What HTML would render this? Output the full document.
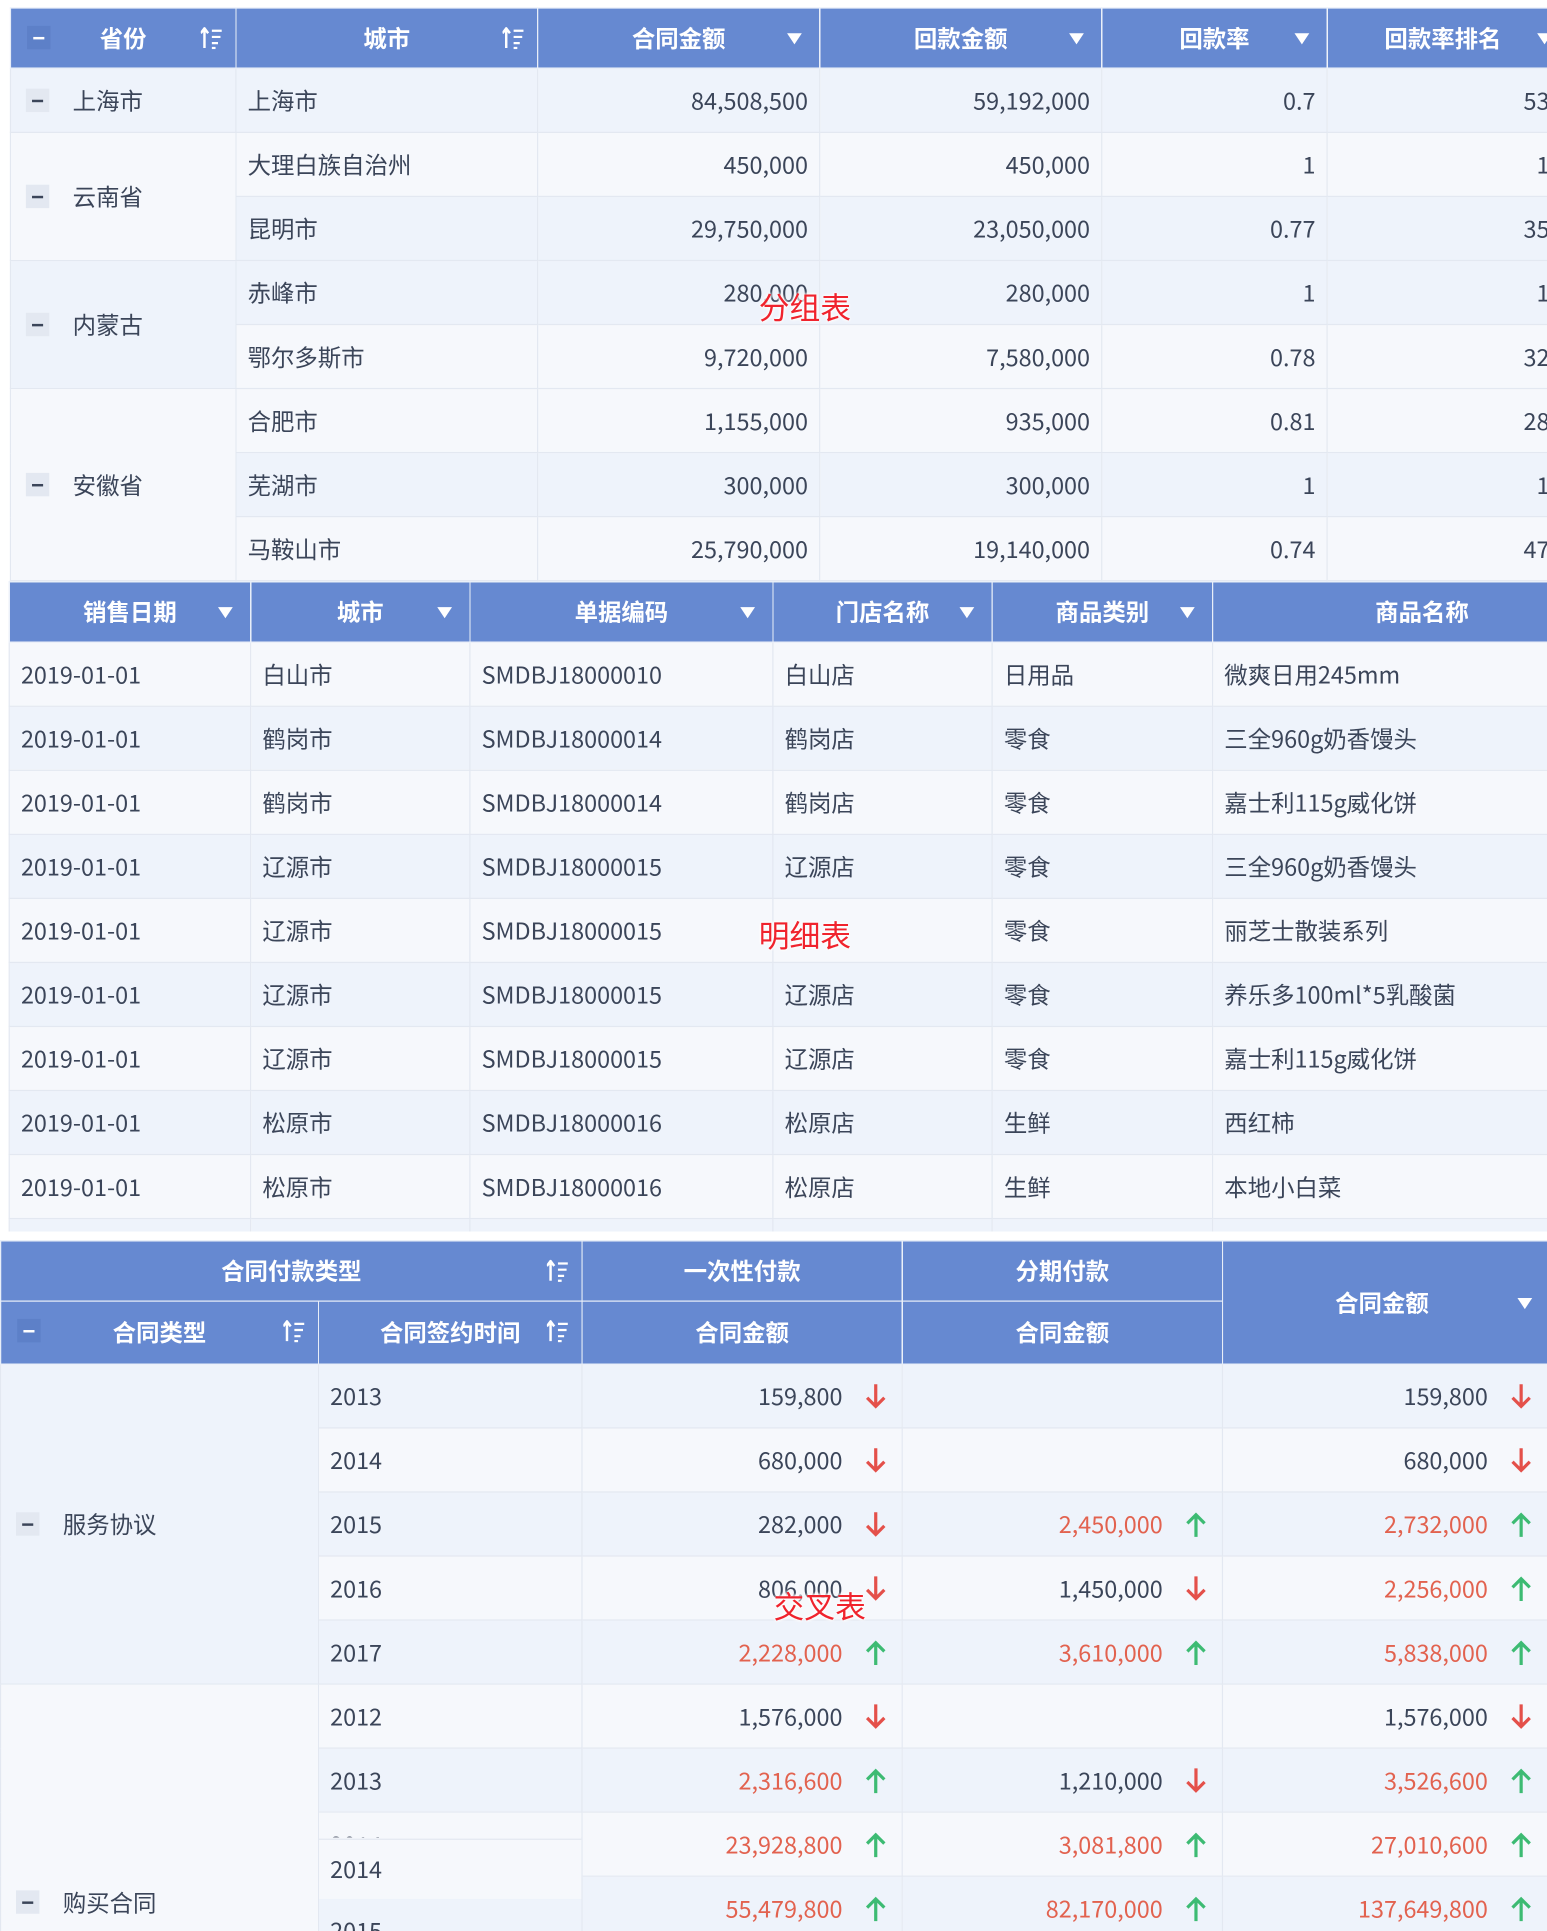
<!DOCTYPE html>
<html><head><meta charset="utf-8">
<style>
html,body{margin:0;padding:0;background:#fff;width:1547px;height:1931px;overflow:hidden;}
#w{position:absolute;left:0;top:0;width:1256px;height:1568px;transform:scale(1.23169,1.2315);transform-origin:0 0;overflow:hidden;background:#fff;font-family:"Noto Sans CJK SC","Liberation Sans",sans-serif;}
table{position:absolute;border-collapse:collapse;table-layout:fixed;}
td,th{border:1px solid #e3e8f1;padding:0 9px;font-size:19px;color:#3b4559;white-space:nowrap;overflow:hidden;position:relative;font-weight:normal;line-height:24px;}
th{background:#6689d1;color:#fff;font-weight:bold;border-color:#e8eef8;text-align:center;}
.a{background:#eef3fb}.b{background:#f6f8fc}
.r{text-align:right}
.m{display:inline-block;width:19px;height:19px;background:#e3e8f1;vertical-align:middle;margin-right:19px;position:relative;top:-2px}
.m:after{content:"";position:absolute;left:5px;top:9px;width:9px;height:2px;background:#3b4559}
th .m{background:#5d80c8;position:absolute;left:13px;top:14px}
th .m:after{background:#fff}
.s{position:absolute;right:10px;top:15px}
.f{position:absolute;right:14px;top:20px;width:0;height:0;border-left:6px solid transparent;border-right:6px solid transparent;border-top:9px solid #fff}
.red{color:#e2624f}
.ar{position:absolute;right:12px;top:15px}
.pr{padding-right:48px}
.lbl{position:absolute;color:#f0232d;font-size:25px;text-shadow:0 0 3px #fff,0 0 3px #fff,0 0 3px #fff;}
.lc{text-align:right;padding-right:0}
</style></head><body><div id="w">

<svg width="0" height="0" style="position:absolute">
<defs>
<g id="so"><path d="M3 1 L3 17 M0 5 L3 1 L6 5" stroke="#fff" stroke-width="2" fill="none"/><path d="M9 3H17M9 8H16M9 13H14M9 17H12" stroke="#fff" stroke-width="1.8"/></g>
<g id="dn"><path d="M9 1V19M2 12L9 19L16 12" stroke="#e4504a" stroke-width="2.6" fill="none"/></g>
<g id="up"><path d="M9 21V3M2 10L9 3L16 10" stroke="#3dbb73" stroke-width="2.6" fill="none"/></g>
</defs></svg>

<!-- Table 1 -->
<table style="left:8px;top:6px;width:1250px">
<colgroup><col style="width:183px"><col style="width:245px"><col style="width:229px"><col style="width:229px"><col style="width:183px"><col style="width:181px"></colgroup>
<tr style="height:49px">
<th><span class="m"></span>省份<svg class="s" width="18" height="18"><use href="#so"/></svg></th>
<th>城市<svg class="s" width="18" height="18"><use href="#so"/></svg></th>
<th>合同金额<span class="f"></span></th>
<th>回款金额<span class="f"></span></th>
<th>回款率<span class="f"></span></th>
<th style="text-align:left;padding-left:46px">回款率排名<span class="f" style="right:-2px"></span></th>
</tr>
<tr style="height:52px" class="a"><td style="padding-left:12px"><span class="m"></span>上海市</td><td>上海市</td><td class="r">84,508,500</td><td class="r">59,192,000</td><td class="r">0.7</td><td class="lc">53</td></tr>
<tr style="height:52px" class="b"><td rowspan="2" class="b" style="padding-left:12px"><span class="m"></span>云南省</td><td>大理白族自治州</td><td class="r">450,000</td><td class="r">450,000</td><td class="r">1</td><td class="lc">1</td></tr>
<tr style="height:52px" class="a"><td>昆明市</td><td class="r">29,750,000</td><td class="r">23,050,000</td><td class="r">0.77</td><td class="lc">35</td></tr>
<tr style="height:52px" class="a"><td rowspan="2" class="a" style="padding-left:12px"><span class="m"></span>内蒙古</td><td>赤峰市</td><td class="r">280,000</td><td class="r">280,000</td><td class="r">1</td><td class="lc">1</td></tr>
<tr style="height:52px" class="b"><td>鄂尔多斯市</td><td class="r">9,720,000</td><td class="r">7,580,000</td><td class="r">0.78</td><td class="lc">32</td></tr>
<tr style="height:52px" class="b"><td rowspan="3" class="b" style="padding-left:12px"><span class="m"></span>安徽省</td><td>合肥市</td><td class="r">1,155,000</td><td class="r">935,000</td><td class="r">0.81</td><td class="lc">28</td></tr>
<tr style="height:52px" class="a"><td>芜湖市</td><td class="r">300,000</td><td class="r">300,000</td><td class="r">1</td><td class="lc">1</td></tr>
<tr style="height:52px" class="b"><td>马鞍山市</td><td class="r">25,790,000</td><td class="r">19,140,000</td><td class="r">0.74</td><td class="lc">47</td></tr>
</table>
<div class="lbl" style="left:616px;top:231px">分组表</div>

<!-- Table 2 -->
<table style="left:7px;top:472px;width:1317px">
<colgroup><col style="width:196px"><col style="width:178px"><col style="width:246px"><col style="width:178px"><col style="width:179px"><col style="width:340px"></colgroup>
<tr style="height:49px"><th>销售日期<span class="f"></span></th><th>城市<span class="f"></span></th><th>单据编码<span class="f"></span></th><th>门店名称<span class="f"></span></th><th>商品类别<span class="f"></span></th><th>商品名称</th></tr>
<tr style="height:52px" class="b"><td>2019-01-01</td><td>白山市</td><td>SMDBJ18000010</td><td>白山店</td><td>日用品</td><td>微爽日用245mm</td></tr>
<tr style="height:52px" class="a"><td>2019-01-01</td><td>鹤岗市</td><td>SMDBJ18000014</td><td>鹤岗店</td><td>零食</td><td>三全960g奶香馒头</td></tr>
<tr style="height:52px" class="b"><td>2019-01-01</td><td>鹤岗市</td><td>SMDBJ18000014</td><td>鹤岗店</td><td>零食</td><td>嘉士利115g威化饼</td></tr>
<tr style="height:52px" class="a"><td>2019-01-01</td><td>辽源市</td><td>SMDBJ18000015</td><td>辽源店</td><td>零食</td><td>三全960g奶香馒头</td></tr>
<tr style="height:52px" class="b"><td>2019-01-01</td><td>辽源市</td><td>SMDBJ18000015</td><td></td><td>零食</td><td>丽芝士散装系列</td></tr>
<tr style="height:52px" class="a"><td>2019-01-01</td><td>辽源市</td><td>SMDBJ18000015</td><td>辽源店</td><td>零食</td><td>养乐多100ml*5乳酸菌</td></tr>
<tr style="height:52px" class="b"><td>2019-01-01</td><td>辽源市</td><td>SMDBJ18000015</td><td>辽源店</td><td>零食</td><td>嘉士利115g威化饼</td></tr>
<tr style="height:52px" class="a"><td>2019-01-01</td><td>松原市</td><td>SMDBJ18000016</td><td>松原店</td><td>生鲜</td><td>西红柿</td></tr>
<tr style="height:52px" class="b"><td>2019-01-01</td><td>松原市</td><td>SMDBJ18000016</td><td>松原店</td><td>生鲜</td><td>本地小白菜</td></tr>
<tr style="height:14px" class="a"><td></td><td></td><td></td><td></td><td></td><td></td></tr>
</table>
<div style="position:absolute;left:0;top:1000px;width:1256px;height:7px;background:#fff"></div>
<div class="lbl" style="left:616px;top:741px">明细表</div>

<!-- Table 3 -->
<table style="left:0;top:1007px;width:1262px">
<colgroup><col style="width:258px"><col style="width:214px"><col style="width:260px"><col style="width:260px"><col style="width:270px"></colgroup>
<tr style="height:49px"><th colspan="2">合同付款类型<svg class="s" width="18" height="18"><use href="#so"/></svg></th><th>一次性付款</th><th>分期付款</th><th rowspan="2" style="padding-right:20px">合同金额<span class="f" style="right:18px;top:46px"></span></th></tr>
<tr style="height:51px"><th><span class="m"></span>合同类型<svg class="s" width="18" height="18"><use href="#so"/></svg></th><th>合同签约时间<svg class="s" width="18" height="18"><use href="#so"/></svg></th><th>合同金额</th><th>合同金额</th></tr>
<tr style="height:52px" class="a"><td rowspan="5" class="a" style="padding-left:12px"><span class="m"></span>服务协议</td><td>2013</td><td class="r pr">159,800<svg class="ar" width="18" height="22"><use href="#dn"/></svg></td><td></td><td class="r pr" style="padding-right:54px">159,800<svg class="ar" width="18" height="22" style="right:18px"><use href="#dn"/></svg></td></tr>
<tr style="height:52px" class="b"><td>2014</td><td class="r pr">680,000<svg class="ar" width="18" height="22"><use href="#dn"/></svg></td><td></td><td class="r pr" style="padding-right:54px">680,000<svg class="ar" width="18" height="22" style="right:18px"><use href="#dn"/></svg></td></tr>
<tr style="height:52px" class="a"><td>2015</td><td class="r pr">282,000<svg class="ar" width="18" height="22"><use href="#dn"/></svg></td><td class="r pr red">2,450,000<svg class="ar" width="18" height="22"><use href="#up"/></svg></td><td class="r pr red" style="padding-right:54px">2,732,000<svg class="ar" width="18" height="22" style="right:18px"><use href="#up"/></svg></td></tr>
<tr style="height:52px" class="b"><td>2016</td><td class="r pr">806,000<svg class="ar" width="18" height="22"><use href="#dn"/></svg></td><td class="r pr">1,450,000<svg class="ar" width="18" height="22"><use href="#dn"/></svg></td><td class="r pr red" style="padding-right:54px">2,256,000<svg class="ar" width="18" height="22" style="right:18px"><use href="#up"/></svg></td></tr>
<tr style="height:52px" class="a"><td>2017</td><td class="r pr red">2,228,000<svg class="ar" width="18" height="22"><use href="#up"/></svg></td><td class="r pr red">3,610,000<svg class="ar" width="18" height="22"><use href="#up"/></svg></td><td class="r pr red" style="padding-right:54px">5,838,000<svg class="ar" width="18" height="22" style="right:18px"><use href="#up"/></svg></td></tr>
<tr style="height:52px" class="b"><td rowspan="4" class="b" style="padding-left:12px;vertical-align:bottom;padding-bottom:18px"><span class="m"></span>购买合同</td><td>2012</td><td class="r pr">1,576,000<svg class="ar" width="18" height="22"><use href="#dn"/></svg></td><td></td><td class="r pr" style="padding-right:54px">1,576,000<svg class="ar" width="18" height="22" style="right:18px"><use href="#dn"/></svg></td></tr>
<tr style="height:52px" class="a"><td>2013</td><td class="r pr red">2,316,600<svg class="ar" width="18" height="22"><use href="#up"/></svg></td><td class="r pr">1,210,000<svg class="ar" width="18" height="22"><use href="#dn"/></svg></td><td class="r pr red" style="padding-right:54px">3,526,600<svg class="ar" width="18" height="22" style="right:18px"><use href="#up"/></svg></td></tr>
<tr style="height:52px" class="b"><td></td><td class="r pr red">23,928,800<svg class="ar" width="18" height="22"><use href="#up"/></svg></td><td class="r pr red">3,081,800<svg class="ar" width="18" height="22"><use href="#up"/></svg></td><td class="r pr red" style="padding-right:54px">27,010,600<svg class="ar" width="18" height="22" style="right:18px"><use href="#up"/></svg></td></tr>
<tr style="height:52px" class="a"><td></td><td class="r pr red">55,479,800<svg class="ar" width="18" height="22"><use href="#up"/></svg></td><td class="r pr red">82,170,000<svg class="ar" width="18" height="22"><use href="#up"/></svg></td><td class="r pr red" style="padding-right:54px">137,649,800<svg class="ar" width="18" height="22" style="right:18px"><use href="#up"/></svg></td></tr>
</table>
<div style="position:absolute;left:259px;top:1472px;width:213px;height:20px;overflow:hidden;background:#f6f8fc"><div style="position:absolute;left:9px;top:12px;font-size:19px;color:#3b4559">2014</div></div>
<div style="position:absolute;left:259px;top:1493px;width:213px;height:48px;background:#f6f8fc;border-top:1px solid #e3e8f1;border-bottom:1px solid #e3e8f1"><div style="position:absolute;left:9px;top:10px;font-size:19px;color:#3b4559">2014</div></div>
<div style="position:absolute;left:259px;top:1542px;width:213px;height:26px;overflow:hidden;background:#eef3fb"><div style="position:absolute;left:9px;top:12px;font-size:19px;color:#3b4559">2015</div></div>
<div class="lbl" style="left:628px;top:1286px">交叉表</div>

</div></body></html>
